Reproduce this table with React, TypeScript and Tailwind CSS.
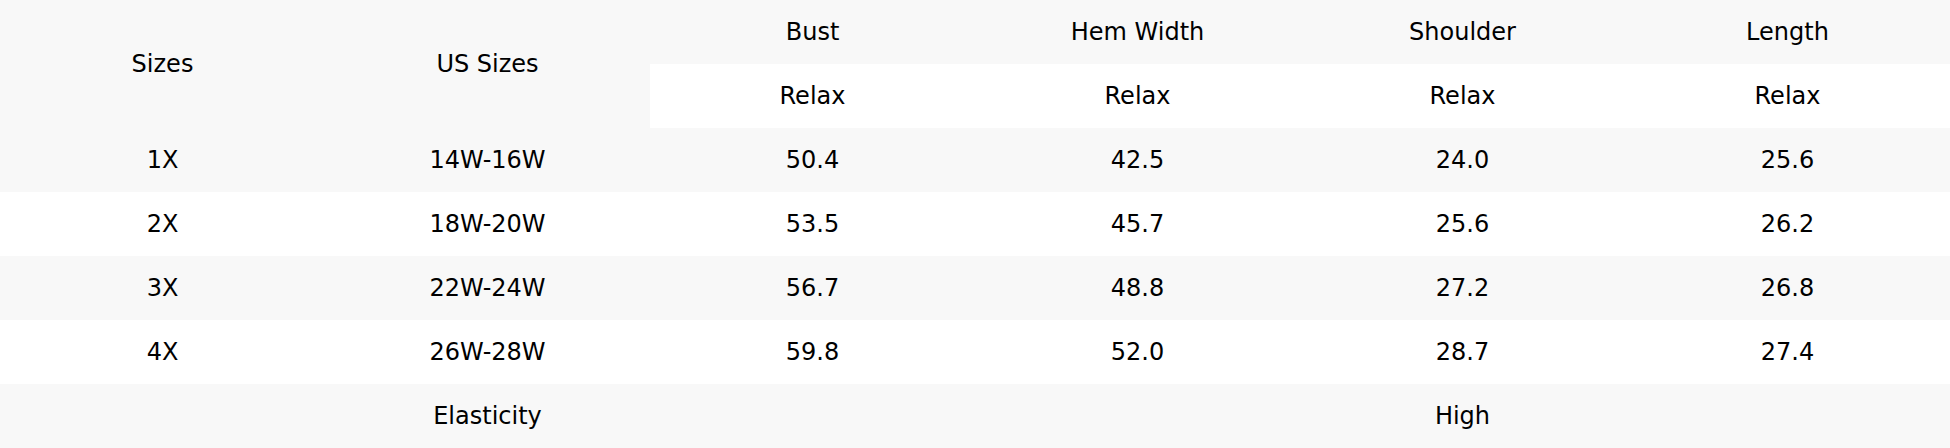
const rows = [
  { size: "1X", us: "14W-16W", bust: "50.4", hem: "42.5", shoulder: "24.0", length: "25.6" },
  { size: "2X", us: "18W-20W", bust: "53.5", hem: "45.7", shoulder: "25.6", length: "26.2" },
  { size: "3X", us: "22W-24W", bust: "56.7", hem: "48.8", shoulder: "27.2", length: "26.8" },
  { size: "4X", us: "26W-28W", bust: "59.8", hem: "52.0", shoulder: "28.7", length: "27.4" },
];

const cell = "h-16 flex items-center justify-center";

export default function App() {
  return (
    <div className="w-[1950px] bg-white text-[24px] text-black font-['DejaVu_Sans',sans-serif]">
      <div className="grid grid-cols-6">
        <div className={`${cell} row-span-2 h-32 bg-[#f8f8f8]`}>Sizes</div>
        <div className={`${cell} row-span-2 h-32 bg-[#f8f8f8]`}>US Sizes</div>
        {["Bust", "Hem Width", "Shoulder", "Length"].map((h) => (
          <div key={h} className={`${cell} bg-[#f8f8f8]`}>{h}</div>
        ))}
        {[0, 1, 2, 3].map((i) => (
          <div key={i} className={`${cell} bg-white`}>Relax</div>
        ))}
        {rows.map((r, i) => {
          const bg = i % 2 === 0 ? "bg-[#f8f8f8]" : "bg-white";
          return [r.size, r.us, r.bust, r.hem, r.shoulder, r.length].map((v, j) => (
            <div key={`${i}-${j}`} className={`${cell} ${bg}`}>{v}</div>
          ));
        })}
        <div className={`${cell} col-span-3 bg-[#f8f8f8]`}>Elasticity</div>
        <div className={`${cell} col-span-3 bg-[#f8f8f8]`}>High</div>
      </div>
    </div>
  );
}
